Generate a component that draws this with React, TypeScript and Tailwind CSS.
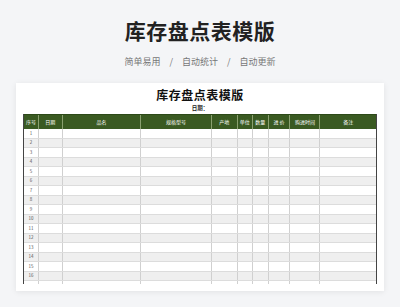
import React from "react";

const cols = [
  { w: 15, t: "序号" },
  { w: 24, t: "日期" },
  { w: 79, t: "品名" },
  { w: 71, t: "规格型号" },
  { w: 26, t: "产地" },
  { w: 15, t: "单位" },
  { w: 16, t: "数量" },
  { w: 22, t: "进 价" },
  { w: 30, t: "购进时间" },
  { w: 56, t: "备注" },
];

export default function App() {
  const rows = Array.from({ length: 16 }, (_, i) => i + 1);
  return (
    <div
      className="w-[400px] h-[307px] overflow-hidden bg-[#f4f5f7] flex flex-col items-center"
      style={{ fontFamily: '"Noto Sans CJK SC", "Noto Sans", sans-serif' }}
    >
      <div className="mt-[16px] h-[28px] leading-[28px] text-[21px] font-bold text-[#222] tracking-[0.5px]">
        库存盘点表模版
      </div>
      <div className="mt-[11px] h-[14px] leading-[14px] text-[9px] text-[#777] flex items-center">
        <span>简单易用</span>
        <span className="mx-[9px]">/</span>
        <span>自动统计</span>
        <span className="mx-[9px]">/</span>
        <span>自动更新</span>
      </div>
      <div className="mt-[14px] w-[368px] h-[208px] bg-white shadow-[0_1px_6px_rgba(0,0,0,0.08)] flex flex-col items-center">
        <div className="mt-[4px] h-[16px] leading-[16px] text-[12px] font-bold text-[#111] tracking-[0.5px]">
          库存盘点表模版
        </div>
        <div className="w-[354px] flex justify-center mt-[1px] h-[9px] leading-[9px] text-[5.5px] font-bold text-[#222]">
          日期：
        </div>
        <div className="mt-[1px] w-[354px] flex flex-col border-l border-r border-[#444]">
          <div className="flex h-[15px] bg-[#3a5a22] border-t border-[#2d4a19]">
            {cols.map((c, i) => (
              <div
                key={i}
                style={{ width: c.w }}
                className={`flex items-center justify-center text-[5px] text-white ${i < cols.length - 1 ? "border-r border-[#8aa070]" : ""}`}
              >
                {c.t}
              </div>
            ))}
          </div>
          {rows.map((r) => (
            <div
              key={r}
              className={`flex h-[9.5px] border-b border-[#dcdcdc] ${r % 2 === 0 ? "bg-[#efefef]" : "bg-white"}`}
            >
              {cols.map((c, i) => (
                <div
                  key={i}
                  style={{ width: c.w }}
                  className={`flex items-center justify-center text-[4.5px] text-[#555] ${i < cols.length - 1 ? "border-r border-[#d0d0d0]" : ""}`}
                >
                  {i === 0 ? r : ""}
                </div>
              ))}
            </div>
          ))}
          <div className="flex h-[3px] bg-white">
            {cols.map((c, i) => (
              <div
                key={i}
                style={{ width: c.w }}
                className={i < cols.length - 1 ? "border-r border-[#d0d0d0]" : ""}
              />
            ))}
          </div>
        </div>
      </div>
    </div>
  );
}
